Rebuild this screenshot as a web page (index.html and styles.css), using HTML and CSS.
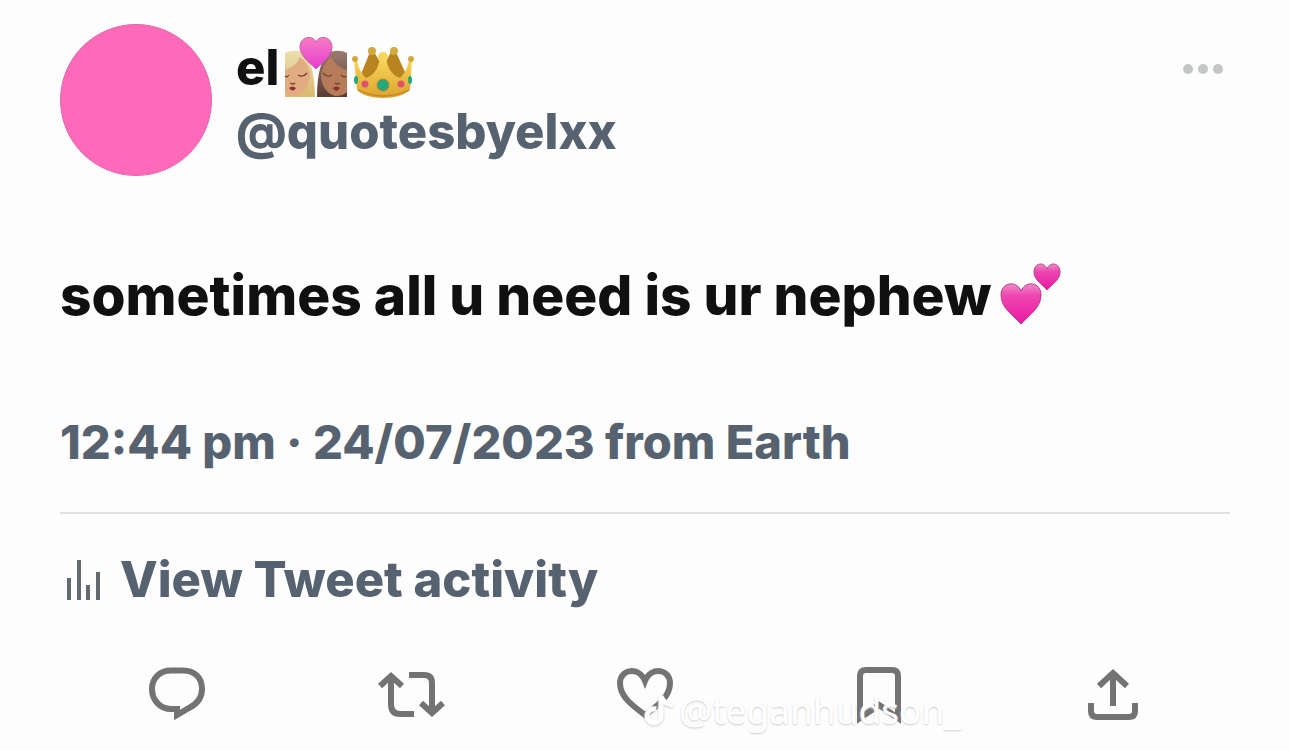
FILE: index.html
```html
<!DOCTYPE html>
<html lang="en">
<head>
    <meta charset="UTF-8">
    <meta name="viewport" content="width=device-width, initial-scale=1.0">
    <title>Tweet</title>
    <link rel="stylesheet" href="styles.css">
</head>
<body>
    <article class="tweet">
        <header class="tweet-header">
            <div class="avatar"></div>
            <div class="author">
                <div class="name">
                    <span>el</span>
                    <svg class="emoji couple" viewBox="0 0 62 62" role="img" aria-label="couple with heart">
                        <defs>
                            <linearGradient id="blonde" x1="0" y1="0" x2="0" y2="1">
                                <stop offset="0" stop-color="#eadfaf"/>
                                <stop offset="1" stop-color="#d9b96d"/>
                            </linearGradient>
                            <linearGradient id="brown" x1="0" y1="0" x2="0" y2="1">
                                <stop offset="0" stop-color="#9b7c70"/>
                                <stop offset="1" stop-color="#593c32"/>
                            </linearGradient>
                            <linearGradient id="kiss" x1="0" y1="0" x2="0" y2="1">
                                <stop offset="0" stop-color="#f77cc4"/>
                                <stop offset="1" stop-color="#e63cd0"/>
                            </linearGradient>
                        </defs>
                        <path fill="url(#blonde)" d="M0 16Q8 12 17 15Q29 22 30 60H0z"/>
                        <path fill="#e2ac83" d="M0 33Q11 30 15 20Q26 28 25 41Q22 56 10 59Q3 59 0 55z"/>
                        <path fill="url(#brown)" d="M32 60Q32 24 45 15Q55 12 62 16V60z"/>
                        <path fill="#b67b59" d="M62 33Q51 30 46 20Q36 28 36 41Q39 56 50 59Q58 59 62 55z"/>
                        <path fill="none" stroke="#70452e" stroke-width="1.3" d="M0 39q2 2 4-1M13 38q5 3 9-2M38 36q4 5 9 2M56 38q3 3 5 1M5 46q3 2 5 0M50 46q2 2 5 0"/>
                        <path fill="#8e302f" d="M4 51q3-3 7 0q-3 5-7 0M48 51q3-3 7 0q-4 6-7 0"/>
                        <path fill="url(#kiss)" stroke="#c65ba4" stroke-width="1" d="M31 32C25 26 15 19 15 10C15 0 27-3 31 5C35-3 47 0 47 10C47 19 37 26 31 32z"/>
                    </svg>
                    <svg class="emoji crown" viewBox="0 0 62 62" role="img" aria-label="crown">
                        <defs>
                            <linearGradient id="gold" x1="0" y1="0" x2="0" y2="1">
                                <stop offset="0" stop-color="#f8d95c"/>
                                <stop offset="1" stop-color="#dca32f"/>
                            </linearGradient>
                        </defs>
                        <path fill="#b9841f" d="M6 42L17 15H21L30 30L38 15H43L55 42Q30 52 6 42z"/>
                        <path fill="url(#gold)" d="M1 23L4 24Q7 36 13 41Q25 37 27 20H33Q35 37 47 41Q53 36 56 24L59 23L57 53Q48 61 30 61Q12 61 4 53z"/>
                        <g fill="#d3a83e">
                            <circle cx="2" cy="22" r="3"/>
                            <circle cx="19" cy="14" r="4"/>
                            <circle cx="41" cy="14" r="4"/>
                            <circle cx="58" cy="22" r="3"/>
                        </g>
                        <circle cx="30" cy="20" r="5" fill="#f8d65b"/>
                        <path fill="none" stroke="#c98a29" stroke-width="1.5" d="M5 53Q30 65 56 53"/>
                        <circle cx="30" cy="48" r="6" fill="#23a77e" stroke="#b88527"/>
                        <circle cx="12" cy="47" r="3.5" fill="#df526b"/>
                        <circle cx="48" cy="47" r="3.5" fill="#df526b"/>
                        <ellipse cx="3" cy="43" rx="2" ry="4" fill="#23a77e"/>
                        <ellipse cx="57" cy="43" rx="2" ry="4" fill="#23a77e"/>
                    </svg>
                </div>
                <a class="handle" href="#">@quotesbyelxx</a>
            </div>
            <button class="more" aria-label="More">
                <svg viewBox="0 0 42 12"><circle cx="6" cy="6" r="5"/><circle cx="21" cy="6" r="5"/><circle cx="36" cy="6" r="5"/></svg>
            </button>
        </header>

        <p class="tweet-text">
            <span>sometimes all u need is ur nephew</span>
            <svg class="emoji hearts" viewBox="0 0 66 66" role="img" aria-label="two hearts">
                <defs>
                    <linearGradient id="pink" x1="0" y1="0" x2="0" y2="1">
                        <stop offset="0" stop-color="#f08bc8"/>
                        <stop offset=".3" stop-color="#ed45b0"/>
                        <stop offset="1" stop-color="#eb18a3"/>
                    </linearGradient>
                </defs>
                <path fill="url(#pink)" stroke="#bd3c8c" stroke-width="1" d="M24 62C16 53 4 46 4 33C4 20 20 18 24 29C29 18 44 20 44 33C44 46 32 53 24 62z"/>
                <path fill="url(#pink)" stroke="#bd3c8c" stroke-width="1" d="M50 28C45 22 37 18 37 10C37 1 47-1 50 7C53-1 63 1 63 10C63 18 55 22 50 28z"/>
            </svg>
        </p>

        <time class="date" datetime="2023-07-24T12:44">12:44 pm · 24/07/2023 from Earth</time>

        <a class="activity" href="#">
            <svg viewBox="0 0 34 42" aria-hidden="true"><path d="M3 19v22M13 1v40M22 26v15M32 13v28"/></svg>
            <span>View Tweet activity</span>
        </a>

        <footer class="actions">
            <button aria-label="Reply">
                <svg viewBox="0 0 66 60"><path d="M27 6.500H39C51 6.500 58 14 58 25C58 34 53 40 45 44L33 51V45H27C16 45 8 36 8 25C8 14 16 6.500 27 6.500z"/></svg>
            </button>
            <button aria-label="Retweet">
                <svg viewBox="0 0 66 60"><path d="M2 22L13 12L24 22M13 12V40Q13 50 22 50H36M31 11H46Q54 11 54 19V48M43 39L54 49L65 39"/></svg>
            </button>
            <button aria-label="Like">
                <svg viewBox="0 0 66 60"><path d="M33 51C21 42 8 33 8 19C8 5 27 2 33 17C39 2 58 5 58 19C58 33 45 42 33 51z"/></svg>
            </button>
            <button aria-label="Bookmark">
                <svg viewBox="0 0 66 60"><path d="M14 54V12Q14 6 20 6H46Q52 6 52 12V54L33 41z"/></svg>
            </button>
            <button aria-label="Share">
                <svg viewBox="0 0 66 60"><path d="M19 22L33 9L47 22M33 9V42M11 39V47Q11 53 17 53H49Q55 53 55 47V39"/></svg>
            </button>
        </footer>

        <div class="watermark">
            <svg viewBox="0 0 28 32" aria-hidden="true"><path d="M16 2V22A7 7 0 1 1 11 15M16 2Q18 10 28 11"/></svg>
            <span>@teganhudson_</span>
        </div>
    </article>
</body>
</html>
```
FILE: styles.css
```css
* {
    box-sizing: border-box;
}
body {
    margin: 0;
    background-color: #fdfdfd;
    color: #101010;
    font-family: Inter, "Noto Sans", sans-serif;
    font-size: 49px;
    font-weight: 800;
    line-height: 64px;
}
button {
    padding: 0;
    border: none;
    background: none;
    cursor: pointer;
}
a {
    color: inherit;
    text-decoration: none;
}
svg {
    display: block;
    overflow: visible;
}
.tweet {
    position: relative;
    padding: 24px 60px;
}
.tweet-header {
    display: flex;
    align-items: flex-start;
}
.avatar {
    flex: none;
    width: 152px;
    height: 152px;
    border-radius: 50%;
    background-color: #ff69b9;
    border: 1px solid #e268ad;
}
.author {
    flex: 1;
    padding-left: 24px;
    padding-top: 12px;
}
.name {
    display: flex;
    align-items: center;
    gap: 6px;
}
.emoji {
    flex: none;
    width: 62px;
    height: 62px;
}
.handle,
.date,
.activity {
    color: #566270;
}
.handle {
    display: block;
}
.more {
    margin-top: 39px;
    margin-right: 6px;
}
.more svg {
    width: 42px;
    height: 12px;
    fill: #c4c6c6;
}
.tweet-text {
    display: flex;
    align-items: center;
    gap: 6px;
    margin: 86px 0 82px;
    font-size: 55px;
}
.hearts {
    width: 66px;
    height: 66px;
}
.date {
    display: block;
    padding-bottom: 38px;
    border-bottom: 2px solid #dfe2e3;
    font-size: 47px;
}
.activity {
    display: flex;
    align-items: center;
    gap: 20px;
    margin-top: 34px;
    padding-left: 6px;
}
.activity svg {
    width: 34px;
    height: 42px;
    fill: none;
    stroke: #626a6d;
    stroke-width: 4;
}
.actions {
    display: flex;
    justify-content: space-around;
    margin-top: 52px;
}
.actions svg {
    width: 66px;
    height: 60px;
    fill: none;
    stroke: #737373;
    stroke-width: 6;
}
.watermark {
    position: absolute;
    left: 50%;
    bottom: 14px;
    display: flex;
    align-items: center;
    gap: 6px;
    color: #fff;
    font-family: "Noto Sans", sans-serif;
    font-size: 37px;
    font-weight: 400;
    line-height: 48px;
    text-shadow: 0 1px 2px #ccc;
    pointer-events: none;
}
.watermark svg {
    width: 28px;
    height: 32px;
    fill: none;
    stroke: #fff;
    stroke-width: 5;
    filter: drop-shadow(0 1px 1px #ccc);
}
```
